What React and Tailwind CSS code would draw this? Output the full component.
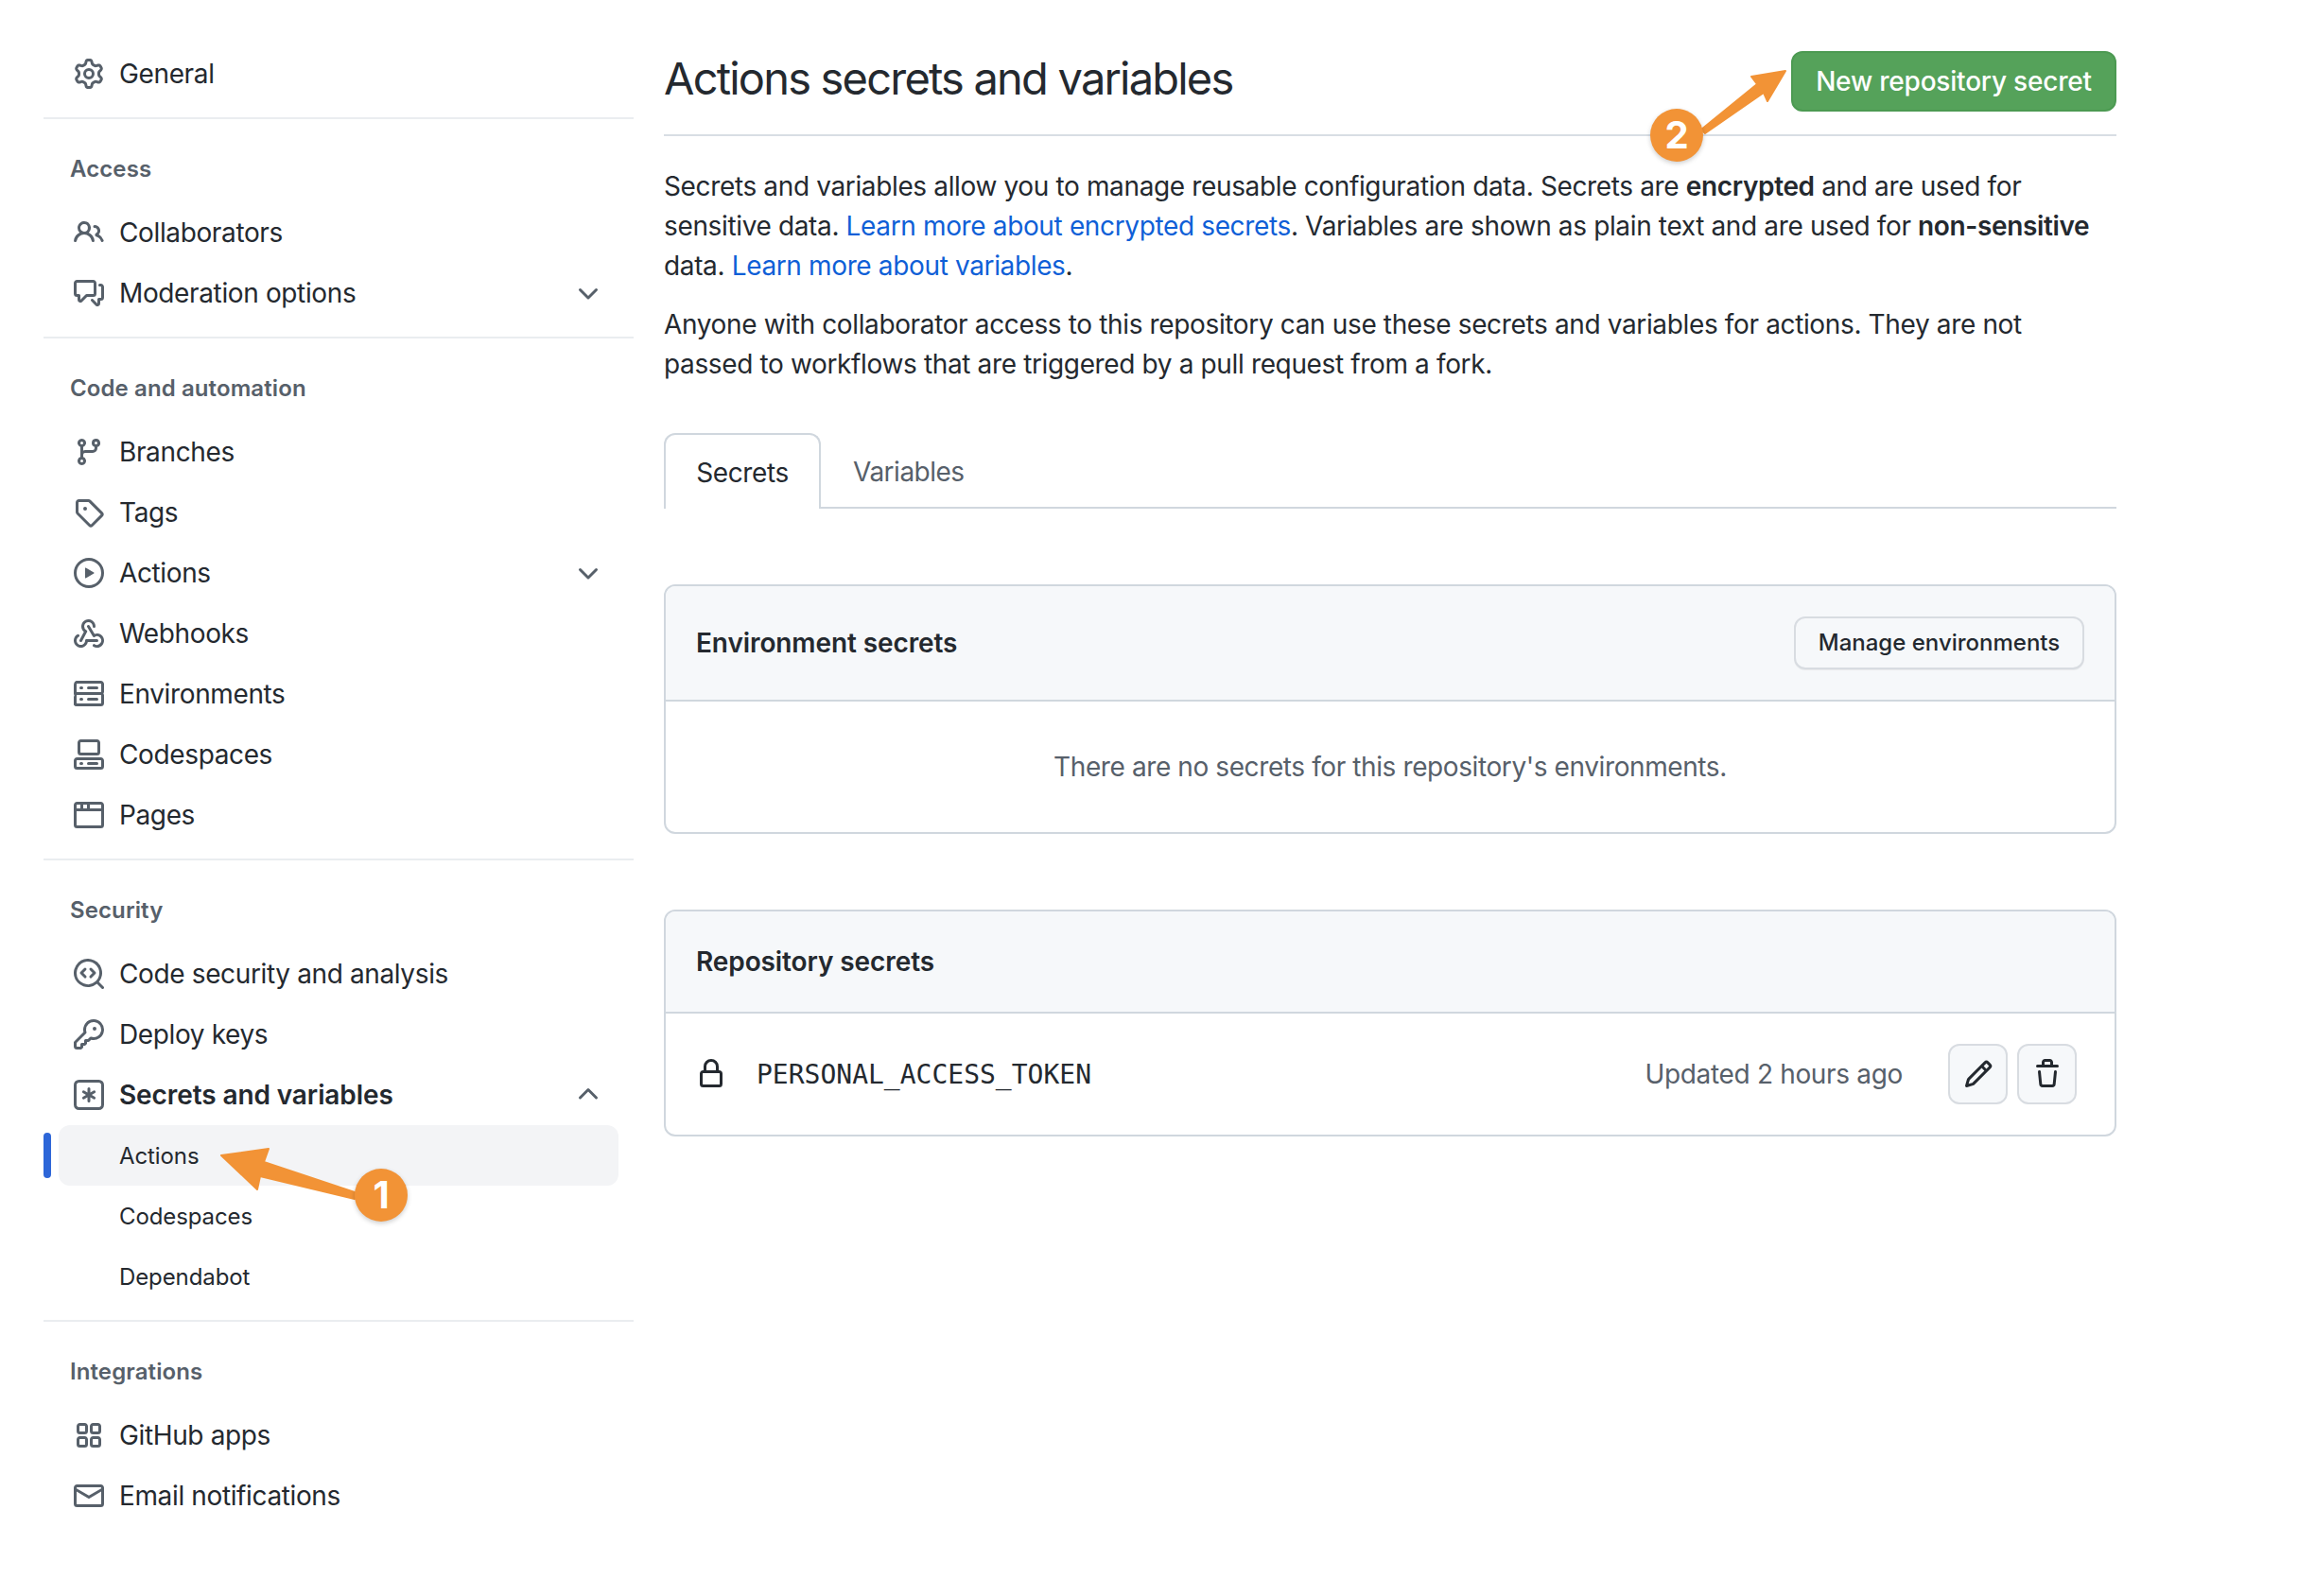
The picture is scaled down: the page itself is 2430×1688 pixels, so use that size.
import React from "react";

const PATHS = {
  gear: ["M8 0a8.2 8.2 0 0 1 .701.031C9.444.095 9.99.645 10.16 1.29l.288 1.107c.018.066.079.158.212.224.231.114.454.243.668.386.123.082.233.09.299.071l1.103-.303c.644-.176 1.392.021 1.82.63.27.385.506.792.704 1.218.315.675.111 1.422-.364 1.891l-.814.806c-.049.048-.098.147-.088.294.016.257.016.515 0 .772-.01.147.038.246.088.294l.814.806c.475.469.679 1.216.364 1.891a7.977 7.977 0 0 1-.704 1.217c-.428.61-1.176.807-1.82.63l-1.102-.302c-.067-.019-.177-.011-.3.071a5.909 5.909 0 0 1-.668.386c-.133.066-.194.158-.211.224l-.29 1.106c-.168.646-.715 1.196-1.458 1.26a8.006 8.006 0 0 1-1.402 0c-.743-.064-1.289-.614-1.458-1.26l-.289-1.106c-.018-.066-.079-.158-.212-.224a5.738 5.738 0 0 1-.668-.386c-.123-.082-.233-.09-.299-.071l-1.103.303c-.644.176-1.392-.021-1.82-.63a8.12 8.12 0 0 1-.704-1.218c-.315-.675-.111-1.422.363-1.891l.815-.806c.05-.048.098-.147.088-.294a6.214 6.214 0 0 1 0-.772c.01-.147-.038-.246-.088-.294l-.815-.806C.635 6.045.431 5.298.746 4.623a7.92 7.92 0 0 1 .704-1.217c.428-.61 1.176-.807 1.82-.63l1.102.302c.067.019.177.011.3-.071.214-.143.437-.272.668-.386.133-.066.194-.158.211-.224l.29-1.106C6.009.645 6.556.095 7.299.03 7.53.01 7.764 0 8 0Zm-.571 1.525c-.036.003-.108.036-.137.146l-.289 1.105c-.147.561-.549.967-.998 1.189-.173.086-.34.183-.5.29-.417.278-.97.423-1.529.27l-1.103-.303c-.109-.03-.175.016-.195.045-.22.312-.412.644-.573.99-.014.031-.021.11.059.19l.815.806c.411.406.562.957.53 1.456a4.709 4.709 0 0 0 0 .582c.032.499-.119 1.05-.53 1.456l-.815.806c-.081.08-.073.159-.059.19.162.346.353.677.573.989.02.03.085.076.195.046l1.102-.303c.56-.153 1.113-.008 1.53.27.161.107.328.204.501.29.447.222.85.629.997 1.189l.289 1.105c.029.109.101.143.137.146a6.6 6.6 0 0 0 1.142 0c.036-.003.108-.036.137-.146l.289-1.105c.147-.561.549-.967.998-1.189.173-.086.34-.183.5-.29.417-.278.97-.423 1.529-.27l1.103.303c.109.029.175-.016.195-.045.22-.313.411-.644.573-.99.014-.031.021-.11-.059-.19l-.815-.806c-.411-.406-.562-.957-.53-1.456a4.709 4.709 0 0 0 0-.582c-.032-.499.119-1.05.53-1.456l.815-.806c.081-.08.073-.159.059-.19a6.464 6.464 0 0 0-.573-.989c-.02-.03-.085-.076-.195-.046l-1.102.303c-.56.153-1.113.008-1.53-.27a4.44 4.44 0 0 0-.501-.29c-.447-.222-.85-.629-.997-1.189l-.289-1.105c-.029-.11-.101-.143-.137-.146a6.6 6.6 0 0 0-1.142 0ZM11 8a3 3 0 1 1-6 0 3 3 0 0 1 6 0ZM9.5 8a1.5 1.5 0 1 0-3.001.001A1.5 1.5 0 0 0 9.5 8Z"],
  people: ["M2 5.5a3.5 3.5 0 1 1 5.898 2.549 5.508 5.508 0 0 1 3.034 4.084.75.75 0 1 1-1.482.235 4 4 0 0 0-7.9 0 .75.75 0 0 1-1.482-.236A5.507 5.507 0 0 1 3.102 8.05 3.493 3.493 0 0 1 2 5.5ZM11 4a3.001 3.001 0 0 1 2.22 5.018 5.01 5.01 0 0 1 2.56 3.012.749.749 0 0 1-.885.954.752.752 0 0 1-.549-.514 3.507 3.507 0 0 0-2.522-2.372.75.75 0 0 1-.574-.73v-.352a.75.75 0 0 1 .416-.672A1.5 1.5 0 0 0 11 5.5.75.75 0 0 1 11 4Zm-5.5-.5a2 2 0 1 0-.001 3.999A2 2 0 0 0 5.5 3.5Z"],
  discussion: ["M1.75 1h8.5c.966 0 1.75.784 1.75 1.75v5.5A1.75 1.75 0 0 1 10.25 10H7.061l-2.574 2.573A1.458 1.458 0 0 1 2 11.543V10h-.25A1.75 1.75 0 0 1 0 8.25v-5.5C0 1.784.784 1 1.75 1ZM1.5 2.75v5.5c0 .138.112.25.25.25h1a.75.75 0 0 1 .75.75v2.19l2.72-2.72a.749.749 0 0 1 .53-.22h3.5a.25.25 0 0 0 .25-.25v-5.5a.25.25 0 0 0-.25-.25h-8.5a.25.25 0 0 0-.25.25Zm13 2a.25.25 0 0 0-.25-.25h-.5a.75.75 0 0 1 0-1.5h.5c.966 0 1.75.784 1.75 1.75v5.5A1.75 1.75 0 0 1 14.25 12H14v1.543a1.458 1.458 0 0 1-2.487 1.03L9.22 12.28a.749.749 0 0 1 .326-1.275.749.749 0 0 1 .734.215l2.22 2.22v-2.19a.75.75 0 0 1 .75-.75h1a.25.25 0 0 0 .25-.25Z"],
  branch: ["M9.5 3.25a2.25 2.25 0 1 1 3 2.122V6A2.5 2.5 0 0 1 10 8.5H6a1 1 0 0 0-1 1v1.128a2.251 2.251 0 1 1-1.5 0V5.372a2.25 2.25 0 1 1 1.5 0v1.836A2.493 2.493 0 0 1 6 7h4a1 1 0 0 0 1-1v-.628A2.25 2.25 0 0 1 9.5 3.25Zm-6 0a.75.75 0 1 0 1.5 0 .75.75 0 0 0-1.5 0Zm8.25-.75a.75.75 0 1 0 0 1.5.75.75 0 0 0 0-1.5ZM4.25 12a.75.75 0 1 0 0 1.5.75.75 0 0 0 0-1.5Z"],
  tag: ["M1 7.775V2.75C1 1.784 1.784 1 2.75 1h5.025c.464 0 .91.184 1.238.513l6.25 6.25a1.75 1.75 0 0 1 0 2.474l-5.026 5.026a1.75 1.75 0 0 1-2.474 0l-6.25-6.25A1.752 1.752 0 0 1 1 7.775Zm1.5 0c0 .066.026.13.073.177l6.25 6.25a.25.25 0 0 0 .354 0l5.025-5.025a.25.25 0 0 0 0-.354l-6.25-6.25a.25.25 0 0 0-.177-.073H2.75a.25.25 0 0 0-.25.25ZM6 5a1 1 0 1 1 0 2 1 1 0 0 1 0-2Z"],
  play: ["M8 0a8 8 0 1 1 0 16A8 8 0 0 1 8 0ZM1.5 8a6.5 6.5 0 1 0 13 0 6.5 6.5 0 0 0-13 0Zm4.879-2.773 4.264 2.559a.25.25 0 0 1 0 .428l-4.264 2.559A.25.25 0 0 1 6 10.559V5.442a.25.25 0 0 1 .379-.215Z"],
  webhook: [
    "M5.5 4.25a2.25 2.25 0 0 1 4.5 0 .75.75 0 0 0 1.5 0 3.75 3.75 0 1 0-6.14 2.889l-2.272 4.258a.75.75 0 0 0 1.324.706L7 7.25a.75.75 0 0 0-.309-1.015A2.25 2.25 0 0 1 5.5 4.25Z",
    "M7.364 3.607a.75.75 0 0 1 1.03.257l2.608 4.349a3.75 3.75 0 1 1-.628 6.785.75.75 0 0 1 .752-1.299 2.25 2.25 0 1 0-.033-3.88.75.75 0 0 1-1.03-.256L7.107 4.636a.75.75 0 0 1 .257-1.03Z",
    "M2.9 8.776A.75.75 0 0 1 2.625 9.8 2.25 2.25 0 1 0 6 11.75a.75.75 0 0 1 .75-.751h5.5a.75.75 0 0 1 0 1.5H7.425a3.751 3.751 0 1 1-5.55-3.998.75.75 0 0 1 1.024.274Z",
  ],
  server: ["M1.75 1h12.5c.966 0 1.75.784 1.75 1.75v4c0 .372-.116.717-.314 1 .198.283.314.628.314 1v4a1.75 1.75 0 0 1-1.75 1.75H1.75A1.75 1.75 0 0 1 0 13.75v-4c0-.372.116-.717.314-1a1.739 1.739 0 0 1-.314-1v-4C0 1.784.784 1 1.75 1ZM1.5 2.75v4c0 .138.112.25.25.25h12.5a.25.25 0 0 0 .25-.25v-4a.25.25 0 0 0-.25-.25H1.75a.25.25 0 0 0-.25.25Zm.25 5.75a.25.25 0 0 0-.25.25v4c0 .138.112.25.25.25h12.5a.25.25 0 0 0 .25-.25v-4a.25.25 0 0 0-.25-.25ZM7 4.75A.75.75 0 0 1 7.75 4h4.5a.75.75 0 0 1 0 1.5h-4.5A.75.75 0 0 1 7 4.75ZM7.75 10h4.5a.75.75 0 0 1 0 1.5h-4.5a.75.75 0 0 1 0-1.5ZM3 4.75A.75.75 0 0 1 3.75 4h.5a.75.75 0 0 1 0 1.5h-.5A.75.75 0 0 1 3 4.75ZM3.75 10h.5a.75.75 0 0 1 0 1.5h-.5a.75.75 0 0 1 0-1.5Z"],
  codespaces: [
    "M0 11.25c0-.966.784-1.75 1.75-1.75h12.5c.966 0 1.75.784 1.75 1.75v3A1.75 1.75 0 0 1 14.25 16H1.75A1.75 1.75 0 0 1 0 14.25Zm2-9.5C2 .784 2.784 0 3.75 0h8.5C13.216 0 14 .784 14 1.75v5a1.75 1.75 0 0 1-1.75 1.75h-8.5A1.75 1.75 0 0 1 2 6.75Zm1.75-.25a.25.25 0 0 0-.25.25v5c0 .138.112.25.25.25h8.5a.25.25 0 0 0 .25-.25v-5a.25.25 0 0 0-.25-.25Zm-2 9.5a.25.25 0 0 0-.25.25v3c0 .138.112.25.25.25h12.5a.25.25 0 0 0 .25-.25v-3a.25.25 0 0 0-.25-.25Z",
    "M7 12.75a.75.75 0 0 1 .75-.75h4.5a.75.75 0 0 1 0 1.5h-4.5a.75.75 0 0 1-.75-.75Zm-4 0a.75.75 0 0 1 .75-.75h.5a.75.75 0 0 1 0 1.5h-.5a.75.75 0 0 1-.75-.75Z",
  ],
  browser: ["M0 2.75C0 1.784.784 1 1.75 1h12.5c.966 0 1.75.784 1.75 1.75v10.5A1.75 1.75 0 0 1 14.25 15H1.75A1.75 1.75 0 0 1 0 13.25ZM14.5 6h-13v7.25c0 .138.112.25.25.25h12.5a.25.25 0 0 0 .25-.25Zm-6-3.5v2h6V2.75a.25.25 0 0 0-.25-.25ZM5 2.5v2h2v-2Zm-3.25 0a.25.25 0 0 0-.25.25V4.5h2v-2Z"],
  codescan: [
    "M8.47 4.97a.75.75 0 0 0 0 1.06L9.94 7.5 8.47 8.97a.75.75 0 1 0 1.06 1.06l2-2a.75.75 0 0 0 0-1.06l-2-2a.75.75 0 0 0-1.06 0ZM6.53 6.03a.75.75 0 0 0-1.06-1.06l-2 2a.75.75 0 0 0 0 1.06l2 2a.75.75 0 1 0 1.06-1.06L5.06 7.5l1.47-1.47Z",
    "M12.246 13.307a7.501 7.501 0 1 1 1.06-1.06l2.474 2.473a.75.75 0 1 1-1.06 1.06ZM1.5 7.5a6.002 6.002 0 0 0 3.608 5.504 6.002 6.002 0 0 0 6.486-1.117.748.748 0 0 1 .292-.293A6 6 0 1 0 1.5 7.5Z",
  ],
  key: ["M10.5 0a5.499 5.499 0 1 1-1.288 10.848l-.932.932a.749.749 0 0 1-.53.22H7v.75a.749.749 0 0 1-.22.53l-.5.5a.749.749 0 0 1-.53.22H5v.75a.749.749 0 0 1-.22.53l-.5.5a.749.749 0 0 1-.53.22h-2A1.75 1.75 0 0 1 0 14.25v-2c0-.199.079-.389.22-.53l4.932-4.932A5.5 5.5 0 0 1 10.5 0Zm-4 5.5c-.001.431.069.86.205 1.269a.75.75 0 0 1-.181.768L1.5 12.56v1.69c0 .138.112.25.25.25h1.69l.06-.06v-1.19a.75.75 0 0 1 .75-.75h1.19l.06-.06v-1.19a.75.75 0 0 1 .75-.75h1.19l1.023-1.025a.75.75 0 0 1 .768-.18A4 4 0 1 0 6.5 5.5ZM11 6a1 1 0 1 1 0-2 1 1 0 0 1 0 2Z"],
  asterisk: [
    "M0 2.75A2.75 2.75 0 0 1 2.75 0h10.5A2.75 2.75 0 0 1 16 2.75v10.5A2.75 2.75 0 0 1 13.25 16H2.75A2.75 2.75 0 0 1 0 13.25ZM2.75 1.5c-.69 0-1.25.56-1.25 1.25v10.5c0 .69.56 1.25 1.25 1.25h10.5c.69 0 1.25-.56 1.25-1.25V2.75c0-.69-.56-1.25-1.25-1.25Z",
    "M8 4a.75.75 0 0 1 .75.75V6.7l1.69-.975a.75.75 0 0 1 .75 1.3L9.5 8l1.69.976a.75.75 0 0 1-.75 1.298L8.75 9.3v1.951a.75.75 0 0 1-1.5 0V9.299l-1.69.976a.75.75 0 0 1-.75-1.3L6.5 8l-1.69-.975a.75.75 0 0 1 .75-1.3l1.69.976V4.75A.75.75 0 0 1 8 4Z",
  ],
  apps: ["M1.5 3.25c0-.966.784-1.75 1.75-1.75h2.5c.966 0 1.75.784 1.75 1.75v2.5A1.75 1.75 0 0 1 5.75 7.5h-2.5A1.75 1.75 0 0 1 1.5 5.75Zm7 0c0-.966.784-1.75 1.75-1.75h2.5c.966 0 1.75.784 1.75 1.75v2.5a1.75 1.75 0 0 1-1.75 1.75h-2.5A1.75 1.75 0 0 1 8.5 5.75Zm-7 7c0-.966.784-1.75 1.75-1.75h2.5c.966 0 1.75.784 1.75 1.75v2.5a1.75 1.75 0 0 1-1.75 1.75h-2.5a1.75 1.75 0 0 1-1.75-1.75Zm7 0c0-.966.784-1.75 1.75-1.75h2.5c.966 0 1.75.784 1.75 1.75v2.5a1.75 1.75 0 0 1-1.75 1.75h-2.5a1.75 1.75 0 0 1-1.75-1.75ZM3.25 3a.25.25 0 0 0-.25.25v2.5c0 .138.112.25.25.25h2.5A.25.25 0 0 0 6 5.75v-2.5A.25.25 0 0 0 5.75 3Zm7 0a.25.25 0 0 0-.25.25v2.5c0 .138.112.25.25.25h2.5a.25.25 0 0 0 .25-.25v-2.5a.25.25 0 0 0-.25-.25Zm-7 7a.25.25 0 0 0-.25.25v2.5c0 .138.112.25.25.25h2.5a.25.25 0 0 0 .25-.25v-2.5a.25.25 0 0 0-.25-.25Zm7 0a.25.25 0 0 0-.25.25v2.5c0 .138.112.25.25.25h2.5a.25.25 0 0 0 .25-.25v-2.5a.25.25 0 0 0-.25-.25Z"],
  mail: ["M1.75 2h12.5c.966 0 1.75.784 1.75 1.75v8.5A1.75 1.75 0 0 1 14.25 14H1.75A1.75 1.75 0 0 1 0 12.25v-8.5C0 2.784.784 2 1.75 2ZM1.5 12.251c0 .138.112.25.25.25h12.5a.25.25 0 0 0 .25-.25V5.809L8.38 9.397a.75.75 0 0 1-.76 0L1.5 5.809v6.442Zm13-8.181v-.32a.25.25 0 0 0-.25-.25H1.75a.25.25 0 0 0-.25.25v.32L8 7.88Z"],
  down: ["M12.78 5.22a.749.749 0 0 1 0 1.06l-4.25 4.25a.749.749 0 0 1-1.06 0L3.22 6.28a.749.749 0 1 1 1.06-1.06L8 8.939l3.72-3.719a.749.749 0 0 1 1.06 0Z"],
  up: ["M3.22 10.53a.749.749 0 0 1 0-1.06l4.25-4.25a.749.749 0 0 1 1.06 0l4.25 4.25a.749.749 0 1 1-1.06 1.06L8 6.811 4.28 10.53a.749.749 0 0 1-1.06 0Z"],
  lock: ["M4 4a4 4 0 0 1 8 0v2h.25c.966 0 1.75.784 1.75 1.75v5.5A1.75 1.75 0 0 1 12.25 15h-8.5A1.75 1.75 0 0 1 2 13.25v-5.5C2 6.784 2.784 6 3.75 6H4Zm8.25 3.5h-8.5a.25.25 0 0 0-.25.25v5.5c0 .138.112.25.25.25h8.5a.25.25 0 0 0 .25-.25v-5.5a.25.25 0 0 0-.25-.25ZM10.5 6V4a2.5 2.5 0 1 0-5 0v2Z"],
  pencil: ["M11.013 1.427a1.75 1.75 0 0 1 2.474 0l1.086 1.086a1.75 1.75 0 0 1 0 2.474l-8.61 8.61c-.21.21-.47.364-.756.445l-3.251.93a.75.75 0 0 1-.927-.928l.929-3.25c.081-.286.235-.547.445-.758l8.61-8.61Zm.176 4.823L9.75 4.81l-6.286 6.287a.253.253 0 0 0-.064.108l-.558 1.953 1.953-.558a.253.253 0 0 0 .108-.064Zm1.238-3.763a.25.25 0 0 0-.354 0L10.811 3.75l1.439 1.44 1.263-1.263a.25.25 0 0 0 0-.354Z"],
  trash: ["M11 1.75V3h2.25a.75.75 0 0 1 0 1.5H2.75a.75.75 0 0 1 0-1.5H5V1.75C5 .784 5.784 0 6.75 0h2.5C10.216 0 11 .784 11 1.75ZM4.496 6.675l.66 6.6a.25.25 0 0 0 .249.225h5.19a.25.25 0 0 0 .249-.225l.66-6.6a.75.75 0 0 1 1.492.149l-.66 6.6A1.748 1.748 0 0 1 10.595 15h-5.19a1.75 1.75 0 0 1-1.741-1.575l-.66-6.6a.75.75 0 1 1 1.492-.15ZM6.5 1.75V3h3V1.75a.25.25 0 0 0-.25-.25h-2.5a.25.25 0 0 0-.25.25Z"],
};

function Oct({ name, size = 32, className }) {
  return (
    <svg width={size} height={size} viewBox="0 0 16 16" fill="currentColor" fillRule="evenodd" className={className}>
      {PATHS[name].map((d, i) => (
        <path key={i} d={d} />
      ))}
    </svg>
  );
}

function Row({ icon, label, chevron, bold }) {
  return (
    <div className="flex h-[64px] items-center pl-[32px] pr-[32px] text-[28px] text-[#24292f]">
      <Oct name={icon} className="shrink-0 text-[#57606a]" />
      <span className={`ml-[16px] flex-1 ${bold ? "font-semibold tracking-[-0.1px]" : "tracking-[-0.37px]"}`}>{label}</span>
      {chevron && (
        <Oct name={chevron} size={32} className={`shrink-0 text-[#57606a] ${chevron === "up" ? "-translate-y-[1px]" : "translate-y-[1px]"}`} />
      )}
    </div>
  );
}

function SubRow({ label, active }) {
  return (
    <div className="relative flex h-[64px] items-center">
      {active && <div className="h-[48px] w-[8px] rounded-[4px] bg-[#2d66d8]" />}
      <div className={`absolute left-[16px] top-0 flex h-[64px] w-[592px] items-center rounded-[12px] pl-[64px] pt-[1px] text-[24px] tracking-[-0.1px] text-[#24292f] ${active ? "bg-[#f3f4f6]" : ""}`}>
        {label}
      </div>
    </div>
  );
}

function Divider() {
  return <div className="mt-[14px] h-[2px] bg-[#eaedf0]" />;
}

function Label({ children }) {
  return (
    <div className="mb-[15px] mt-[33px] flex h-[40px] items-center pl-[28px] text-[24px] font-semibold tracking-[0.1px] text-[#57606a]">
      {children}
    </div>
  );
}

function Sidebar() {
  return (
    <aside className="w-[624px] shrink-0">
      <Row icon="gear" label="General" />
      <Divider />
      <Label>Access</Label>
      <Row icon="people" label="Collaborators" />
      <Row icon="discussion" label="Moderation options" chevron="down" />
      <Divider />
      <Label>Code and automation</Label>
      <Row icon="branch" label="Branches" />
      <Row icon="tag" label="Tags" />
      <Row icon="play" label="Actions" chevron="down" />
      <Row icon="webhook" label="Webhooks" />
      <Row icon="server" label="Environments" />
      <Row icon="codespaces" label="Codespaces" />
      <Row icon="browser" label="Pages" />
      <Divider />
      <Label>Security</Label>
      <Row icon="codescan" label="Code security and analysis" />
      <Row icon="key" label="Deploy keys" />
      <Row icon="asterisk" label="Secrets and variables" chevron="up" bold />
      <SubRow label="Actions" active />
      <SubRow label="Codespaces" />
      <SubRow label="Dependabot" />
      <Divider />
      <Label>Integrations</Label>
      <Row icon="apps" label="GitHub apps" />
      <Row icon="mail" label="Email notifications" />
    </aside>
  );
}

const LINK = "text-[#0f5fd7]";

function Main() {
  return (
    <main className="ml-[32px] mt-[8px] w-[1536px] shrink-0">
      <div className="flex h-[90px] items-start justify-between border-b-2 border-[#d8dee4]">
        <h1 className="text-[47px] leading-[58px] font-normal tracking-[-1.8px] text-[#24292f]">Actions secrets and variables</h1>
        <button className="flex h-[64px] w-[344px] items-center justify-center rounded-[12px] border-2 border-[#4c9a52] bg-[#55a25a] text-[28px] font-medium tracking-[-0.2px] text-white">
          New repository secret
        </button>
      </div>

      <p className="mt-[32px] text-[28px] leading-[42px] tracking-[-0.36px] text-[#24292f]">
        Secrets and variables allow you to manage reusable configuration data. Secrets are <b className="font-semibold">encrypted</b> and are used for sensitive data.{" "}
        <span className={LINK}>Learn more about encrypted secrets</span>. Variables are shown as plain text and are used for <b className="whitespace-nowrap font-semibold">non-sensitive</b> data.{" "}
        <span className={LINK}>Learn more about variables</span>.
      </p>
      <p className="mt-[20px] text-[28px] leading-[42px] tracking-[-0.36px] text-[#24292f]">
        Anyone with collaborator access to this repository can use these secrets and variables for actions. They are not
        <br />
        passed to workflows that are triggered by a pull request from a fork.
      </p>

      <div className="mt-[52px] flex h-[80px] border-b-2 border-[#d0d7de]">
        <div className="-mb-[2px] flex h-[80px] w-[166px] items-center justify-center rounded-t-[12px] border-2 border-b-0 border-[#d0d7de] bg-white pt-[1px] text-[28px] tracking-[-0.4px] text-[#24292f]">
          Secrets
        </div>
        <div className="-mb-[2px] flex h-[80px] items-center px-[34px] pt-[2px] text-[28px] tracking-[-0.5px] text-[#57606a]">Variables</div>
      </div>

      <section className="mt-[80px] overflow-hidden rounded-[12px] border-2 border-[#d0d7de]">
        <div className="flex h-[122px] items-center justify-between border-b-2 border-[#d0d7de] bg-[#f6f8fa] px-[32px]">
          <h2 className="text-[28px] font-semibold tracking-[-0.1px] text-[#24292f]">Environment secrets</h2>
          <button className="flex h-[56px] w-[307px] items-center justify-center rounded-[12px] border-2 border-[#d8dce1] bg-[#f6f8fa] text-[24px] font-medium text-[#24292f] shadow-[0_1px_0_rgba(31,35,40,0.06)]">
            Manage environments
          </button>
        </div>
        <div className="flex h-[138px] items-center justify-center text-[28px] tracking-[-0.4px] text-[#57606a]">
          There are no secrets for this repository's environments.
        </div>
      </section>

      <section className="mt-[80px] overflow-hidden rounded-[12px] border-2 border-[#d0d7de]">
        <div className="flex h-[108px] items-center border-b-2 border-[#d0d7de] bg-[#f6f8fa] pl-[32px]">
          <h2 className="text-[28px] font-semibold tracking-[-0.1px] text-[#24292f]">Repository secrets</h2>
        </div>
        <div className="flex h-[128px] items-center pl-[32px] pr-[40px]">
          <Oct name="lock" className="shrink-0 text-[#24292f]" />
          <span className="ml-[32px] flex-1 pt-[2px] font-['DejaVu_Sans_Mono',monospace] text-[28px] text-[#24292f]">PERSONAL_ACCESS_TOKEN</span>
          <span className="mr-[48px] text-[28px] tracking-[-0.33px] text-[#57606a]">Updated 2 hours ago</span>
          <button className="flex h-[64px] w-[63px] items-center justify-center rounded-[12px] border-2 border-[#d8dce1] bg-[#f6f8fa] text-[#24292f]">
            <Oct name="pencil" />
          </button>
          <button className="ml-[10px] flex h-[64px] w-[63px] items-center justify-center rounded-[12px] border-2 border-[#d8dce1] bg-[#f6f8fa] text-[#24292f]">
            <Oct name="trash" />
          </button>
        </div>
      </section>
    </main>
  );
}

function Callouts() {
  const badge = "absolute flex h-[56px] w-[56px] items-center justify-center rounded-full bg-[#f29336] text-[40px] font-bold text-white shadow-[0_2px_5px_rgba(0,0,0,0.2)]";
  return (
    <>
      <svg className="pointer-events-none absolute left-0 top-0" width="2430" height="1688" viewBox="0 0 2430 1688" fill="#f29336">
        <polygon points="234,1222 284,1215 279,1229 375,1261 375,1268 275,1244 272,1258" stroke="#f29336" strokeWidth="2" strokeLinejoin="round" />
        <polygon points="1888,75 1852,81 1858,89 1799,137 1803,141 1865,98 1869,107" stroke="#f29336" strokeWidth="2" strokeLinejoin="round" />
      </svg>
      <div className={`${badge} left-[375px] top-[1236px]`}>1</div>
      <div className={`${badge} left-[1745px] top-[115px]`}>2</div>
    </>
  );
}

export default function App() {
  return (
    <div className="relative flex h-[1688px] w-[2430px] overflow-hidden bg-white pl-[46px] pt-[46px] font-['Inter',sans-serif]">
      <Sidebar />
      <Main />
      <Callouts />
    </div>
  );
}
